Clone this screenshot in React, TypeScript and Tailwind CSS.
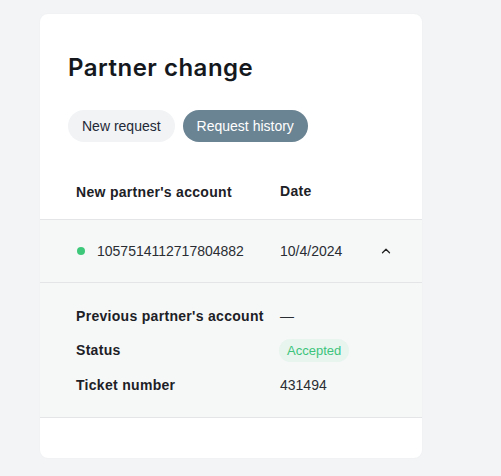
import { ChevronUp } from "lucide-react";

const body = { fontFamily: '"Liberation Sans", Arial, sans-serif' };

export default function App() {
  return (
    <div className="min-h-screen bg-[#f3f4f6] pl-10 pt-[14px]" style={body}>
      <div className="w-[382px] h-[444px] rounded-lg bg-white shadow-[0_0_2px_rgba(0,0,0,0.04)]">
        {/* Title */}
        <div className="px-7 pt-[38px]">
          <h2
            className="text-[24px] leading-8 font-semibold text-[#15191e] tracking-[0.5px]"
            style={{ fontFamily: '"Inter", "Open Sans", sans-serif' }}
          >
            Partner change
          </h2>

          {/* Tabs */}
          <div className="flex gap-2 mt-[26px]">
            <button className="h-8 px-[14px] rounded-full bg-[#f1f3f5] text-[14px] text-[#1f2937]">
              New request
            </button>
            <button className="h-8 px-[14px] rounded-full bg-[#6b8493] text-[14px] text-white">
              Request history
            </button>
          </div>
        </div>

        {/* Table header */}
        <div className="mt-6 h-[54px] flex items-center pl-9 border-b border-[#e3e5e7] text-[14px] font-bold text-[#1d2126] tracking-[0.3px]">
          <div className="w-[204px]">New partner's account</div>
          <div className="-mt-0.5">Date</div>
        </div>

        {/* Row */}
        <div className="h-[63px] flex items-center pl-9 bg-[#f6f8f8] text-[14px] text-[#2a2e33] border-b border-[#e3e5e7]">
          <div className="w-[204px] flex items-center gap-[12px]">
            <span className="w-2 h-2 rounded-full bg-[#3ec97a] ml-[1px]" />
            <span>1057514112717804882</span>
          </div>
          <div className="w-[99px]">10/4/2024</div>
          <ChevronUp className="w-[14px] h-[14px] text-[#222]" strokeWidth={2.2} />
        </div>

        {/* Details */}
        <div className="bg-[#f6f8f8] border-b border-[#e3e5e7] pl-9 pt-[21px] pb-5 flex flex-col gap-[10.5px] text-[14px]">
          <div className="h-6 flex items-center">
            <div className="w-[204px] font-bold text-[#1d2126] tracking-[0.3px]">Previous partner's account</div>
            <div className="text-[#2a2e33]">—</div>
          </div>
          <div className="h-6 flex items-center">
            <div className="w-[203px] font-bold text-[#1d2126] tracking-[0.3px]">Status</div>
            <span className="h-[23px] px-2 rounded-full bg-[#e8f4ee] text-[13px] text-[#3cc47c] flex items-center">
              Accepted
            </span>
          </div>
          <div className="h-6 flex items-center">
            <div className="w-[204px] font-bold text-[#1d2126] tracking-[0.3px]">Ticket number</div>
            <div className="text-[#2a2e33]">431494</div>
          </div>
        </div>
      </div>
    </div>
  );
}
